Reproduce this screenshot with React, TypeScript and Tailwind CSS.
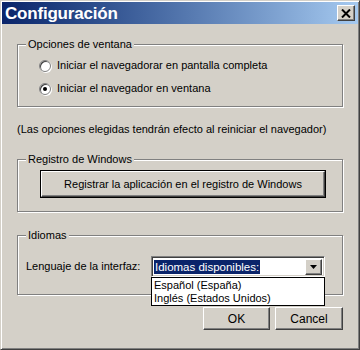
import type { ReactNode } from "react";

const font = { fontFamily: '"Liberation Sans", Arial, sans-serif' };

function Group({ label, className, children }: { label: string; className?: string; children: ReactNode }) {
  return (
    <div className={`relative border border-[#808080] shadow-[inset_1px_1px_0_#fff,1px_1px_0_#fff] ${className ?? ""}`}>
      <span className="absolute -top-[7px] left-[8px] px-[2px] bg-[#d4d0c8] leading-[13px] text-black">{label}</span>
      {children}
    </div>
  );
}

function Radio({ checked, label }: { checked?: boolean; label: string }) {
  return (
    <div className="flex items-center h-[13px]">
      <span className="relative w-[12px] h-[12px] rounded-full bg-white border border-[#808080] shadow-[inset_1px_1px_0_#404040,1px_1px_0_#fff] flex items-center justify-center">
        {checked && <span className="w-[4px] h-[4px] rounded-full bg-black" />}
      </span>
      <span className="ml-[6px]">{label}</span>
    </div>
  );
}

function Btn({ children, className }: { children: ReactNode; className?: string }) {
  return (
    <button
      className={`bg-[#d4d0c8] border border-t-white border-l-white border-r-[#404040] border-b-[#404040] shadow-[inset_-1px_-1px_0_#808080,inset_1px_1px_0_#d4d0c8] text-black leading-none ${className ?? ""}`}
    >
      {children}
    </button>
  );
}

export default function App() {
  return (
    <div
      style={font}
      className="w-[360px] h-[350px] bg-[#d4d0c8] border border-t-[#d4d0c8] border-l-[#d4d0c8] border-r-[#404040] border-b-[#404040] shadow-[inset_1px_1px_0_#fff,inset_-1px_-1px_0_#808080] p-[1px] text-[11px] text-black flex flex-col"
    >
      {/* Title bar */}
      <div className="h-[22px] flex items-center justify-between bg-gradient-to-r from-[#0a246a] to-[#a6caf0] pl-[3px] pr-[3px]">
        <span className="text-white font-bold text-[17px] tracking-[-0.2px] leading-none">Configuración</span>
        <Btn className="w-[18px] h-[16px] flex items-center justify-center">
          <svg width="10" height="9" viewBox="0 0 10 9">
            <path d="M1 0.5 L9 8.5 M9 0.5 L1 8.5" stroke="#000" strokeWidth="2" />
          </svg>
        </Btn>
      </div>

      <div className="px-[15px] flex flex-col">
        <Group label="Opciones de ventana" className="mt-[20px] h-[63px] pl-[21px] pt-[14px]">
          <Radio label="Iniciar el navegadorar en pantalla completa" />
          <div className="h-[10px]" />
          <Radio checked label="Iniciar el navegador en ventana" />
        </Group>

        <p className="mt-[16px] leading-[13px] whitespace-nowrap">
          (Las opciones elegidas tendrán efecto al reiniciar el navegador)
        </p>

        <Group label="Registro de Windows" className="mt-[23px] h-[53px] pt-[10px] pl-[22px]">
          <div className="w-[286px] h-[28px] border border-black">
            <Btn className="w-full h-full">Registrar la aplicación en el registro de Windows</Btn>
          </div>
        </Group>

        <Group label="Idiomas" className="mt-[23px] h-[60px] pt-[20px] pl-[8px]">
          <div className="flex items-center">
            <span className="w-[125px] leading-[13px]">Lenguaje de la interfaz:</span>
            <div className="relative w-[174px] h-[21px] bg-white border border-t-[#808080] border-l-[#808080] border-r-white border-b-white shadow-[inset_1px_1px_0_#404040,inset_-1px_-1px_0_#d4d0c8] flex items-center pl-[2px] pr-[2px]">
              <span className="bg-[#0a246a] text-white leading-[14px] px-[1px] text-[11.5px]">Idiomas disponibles:</span>
              <Btn className="ml-auto w-[17px] h-[16px] flex items-center justify-center">
                <svg width="7" height="4" viewBox="0 0 7 4">
                  <path d="M0 0 H7 L3.5 4 Z" fill="#000" />
                </svg>
              </Btn>
              <div className="absolute left-[-1px] top-[20px] w-[174px] h-[29px] bg-white border border-black z-10 pl-[2px] pt-[1px] text-[11px] leading-[13px]">
                <div>Español (España)</div>
                <div>Inglés (Estados Unidos)</div>
              </div>
            </div>
          </div>
        </Group>

        <div className="mt-[12px] flex justify-end gap-[5px] pr-[0px]">
          <Btn className="w-[67px] h-[23px] text-[12px]">OK</Btn>
          <Btn className="w-[68px] h-[23px] text-[12px]">Cancel</Btn>
        </div>
      </div>
    </div>
  );
}
